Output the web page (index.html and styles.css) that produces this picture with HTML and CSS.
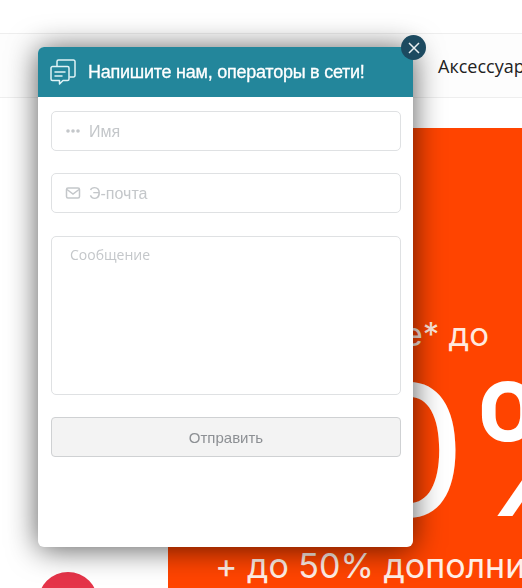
FILE: index.html
```html
<!DOCTYPE html>
<html lang="ru">
<head>
<meta charset="utf-8">
<title>Напишите нам</title>
<link rel="stylesheet" href="styles.css">
</head>
<body>
<div class="page">
  <nav class="nav"><a class="nav-link">Аксессуары</a></nav>
  <section class="banner">
    <div class="line-top">Скидки на все* до</div>
    <div class="line-big">40%</div>
    <div class="line-bottom">+ до 50% дополнительно</div>
  </section>
</div>
<div class="fab"></div>
<div class="widget">
  <button class="close" aria-label="Закрыть">
    <svg width="12" height="12" viewBox="0 0 12 12"><path d="M1 1l10 10M11 1L1 11" stroke="#e8eef1" stroke-width="1.5" fill="none"/></svg>
  </button>
  <header class="widget-head">
    <svg class="head-icon" width="26" height="26" viewBox="0 0 26 26" fill="none" stroke="#dff3f6" stroke-width="1.500" stroke-linejoin="round" stroke-linecap="round">
      <path d="M7 7V2.500A1.500 1.500 0 0 1 8.500 1h15A1.500 1.500 0 0 1 25 2.500v14a1.500 1.500 0 0 1-1.500 1.500H20"/>
      <path d="M2.500 7.500h15A1.500 1.500 0 0 1 19 9v11a1.500 1.500 0 0 1-1.500 1.500H13L9.500 25V21.500h-7A1.500 1.500 0 0 1 1 20V9a1.500 1.500 0 0 1 1.500-1.500z"/>
      <path d="M5 13h10M5 17h7"/>
    </svg>
    <h1 class="head-title">Напишите нам, операторы в сети!</h1>
  </header>
  <form class="widget-form">
    <label class="field">
      <svg class="field-icon" width="16" height="14" viewBox="0 0 16 14" fill="#c4c7ca"><circle cx="3" cy="7" r="1.800"/><circle cx="8" cy="7" r="1.800"/><circle cx="13" cy="7" r="1.800"/></svg>
      <span class="ph">Имя</span>
    </label>
    <label class="field">
      <svg class="field-icon" width="16" height="14" viewBox="0 0 16 14" fill="none" stroke="#c4c7ca" stroke-width="1.500"><rect x="1.500" y="2" width="13" height="10" rx="1.500"/><path d="M2 3.500l6 4.500 6-4.500"/></svg>
      <span class="ph">Э-почта</span>
    </label>
    <div class="area">Сообщение</div>
    <div class="submit">Отправить</div>
  </form>
</div>
</body>
</html>
```
FILE: styles.css
```css
html, body {
  margin: 0;
  height: 100%;
  overflow: hidden;
  background: #fff;
  font-family: "Open Sans", sans-serif;
}
.page {
  display: flex;
  flex-direction: column;
  height: 588px;
  padding-top: 33px;
  box-sizing: border-box;
}
.nav {
  height: 65px;
  box-sizing: border-box;
  border-top: 1px solid #eeeeee;
  border-bottom: 1px solid #eeeeee;
  background: #fdfdfd;
  display: flex;
  align-items: center;
  padding-left: 438px;
  white-space: nowrap;
  overflow: hidden;
}
.nav-link {
  font-size: 18px;
  color: #222;
}
.banner {
  margin: 30px 0 0 168px;
  flex: 1;
  background: #ff4400;
  color: #fff;
  font-family: Inter, sans-serif;
  overflow: hidden;
  white-space: nowrap;
  position: relative;
}
.line-top {
  margin-top: 186px;
  padding-right: 33px;
  text-align: right;
  font-size: 33px;
  line-height: 40px;
  color: #ffe9df;
}
.line-big {
  font-size: 182px;
  line-height: 170px;
  letter-spacing: -5px;
  margin-top: 11px;
  margin-left: 71px;
}
.line-bottom {
  font-size: 34px;
  line-height: 40px;
  margin-top: 11px;
  margin-left: 47px;
  color: #ffeee6;
}
.fab {
  position: fixed;
  left: 38px;
  top: 572px;
  width: 60px;
  height: 60px;
  border-radius: 50%;
  background: #e53449;
}
.widget {
  position: fixed;
  left: 38px;
  top: 47px;
  width: 375px;
  height: 500px;
  background: #fff;
  border-radius: 6px;
  box-shadow: 0 2px 30px rgba(0, 0, 0, 0.65);
  display: flex;
  flex-direction: column;
}
.close {
  position: absolute;
  right: -13px;
  top: -12px;
  width: 25px;
  height: 25px;
  padding: 0;
  border: 0;
  border-radius: 50%;
  background: #1c4a60;
  display: flex;
  align-items: center;
  justify-content: center;
}
.widget-head {
  height: 50px;
  flex: none;
  box-sizing: border-box;
  background: #23869b;
  border-radius: 6px 6px 0 0;
  display: flex;
  align-items: center;
  gap: 12px;
  padding-left: 12px;
}
.head-icon {
  flex: none;
}
.head-title {
  margin: 0;
  font-family: "Liberation Sans", Arial, sans-serif;
  font-size: 18px;
  font-weight: 400;
  letter-spacing: -0.25px;
  color: #fff;
  -webkit-text-stroke: 0.3px #fff;
  white-space: nowrap;
}
.widget-form {
  display: flex;
  flex-direction: column;
  padding: 14px 12px 0 13px;
  gap: 22px;
}
.field {
  height: 40px;
  box-sizing: border-box;
  border: 1px solid #dfe1e3;
  border-radius: 5px;
  display: flex;
  align-items: center;
  gap: 8px;
  padding-left: 13px;
}
.field-icon {
  flex: none;
}
.ph {
  font-family: "Liberation Sans", Arial, sans-serif;
  font-size: 16px;
  padding-top: 1px;
  color: #c4c7ca;
}
.area {
  height: 159px;
  margin-top: 1px;
  box-sizing: border-box;
  border: 1px solid #dfe1e3;
  border-radius: 5px;
  padding: 9px 18px;
  font-size: 14px;
  line-height: 18px;
  color: #c4c7ca;
}
.submit {
  height: 40px;
  box-sizing: border-box;
  border: 1px solid #cfd1d3;
  border-radius: 4px;
  background: #f3f3f3;
  display: flex;
  align-items: center;
  justify-content: center;
  font-family: "Liberation Sans", Arial, sans-serif;
  font-size: 15px;
  color: #8d9094;
}
```
